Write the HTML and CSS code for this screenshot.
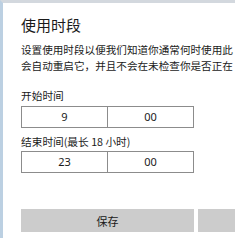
FILE: index.html
```
<!doctype html>
<html>
    <head>
        <title>使用时段</title>
        <link rel="stylesheet" href="styles.css">
    </head>
<body>
    <div class="frame">
        <div class="dialog">
            <h1 class="title">使用时段</h1>
            <p class="desc">设置使用时段以便我们知道你通常何时使用此</p>
            <p class="desc">会自动重启它，并且不会在未检查你是否正在</p>

            <div class="label label-first">开始时间</div>
            <div class="timebox">
                <span class="cell">9</span>
                <span class="cell">00</span>
            </div>

            <div class="label">结束时间(最长 18 小时)</div>
            <div class="timebox">
                <span class="cell">23</span>
                <span class="cell">00</span>
            </div>

            <div class="buttons">
                <button class="btn">保存</button>
                <button class="btn"></button>
            </div>
        </div>
    </div>
</body>
</html>
```

FILE: styles.css
```
* { margin: 0; padding: 0; box-sizing: border-box; }
html, body { width: 235px; height: 238px; overflow: hidden; background: #fff; }
body { font-family: "Noto Sans CJK SC", "Noto Sans", sans-serif; color: #1a1a1a; }

.frame {
    width: 235px;
    height: 238px;
    overflow: hidden;
    border-top: 3px solid #d3d8de;
    border-left: 3px solid #bcd0e2;
}

.dialog {
    padding: 12px 0 0 18px;
}

.title {
    font-size: 15px;
    font-weight: normal;
    line-height: 20px;
    margin-bottom: 7px;
}

.desc {
    font-size: 10.6px;
    line-height: 16px;
    white-space: nowrap;
}

.label {
    font-size: 10.7px;
    line-height: 16px;
    margin-top: 6px;
    margin-bottom: 1px;
}

.label-first {
    margin-top: 14px;
    margin-bottom: 2px;
}

.timebox {
    width: 173px;
    height: 22px;
    display: flex;
    border: 1px solid #8c8c8c;
}

.cell {
    flex: 1;
    text-align: center;
    font-family: "Noto Sans", sans-serif;
    font-size: 11px;
    line-height: 20px;
}

.cell:first-child {
    border-right: 1px solid #8c8c8c;
}

.buttons {
    display: flex;
    gap: 4px;
    margin-top: 36px;
}

.btn {
    flex: none;
    width: 173px;
    height: 23px;
    border: none;
    background: #cccccc;
    font-family: "Noto Sans CJK SC", sans-serif;
    font-size: 11px;
    color: #1a1a1a;
}
```
